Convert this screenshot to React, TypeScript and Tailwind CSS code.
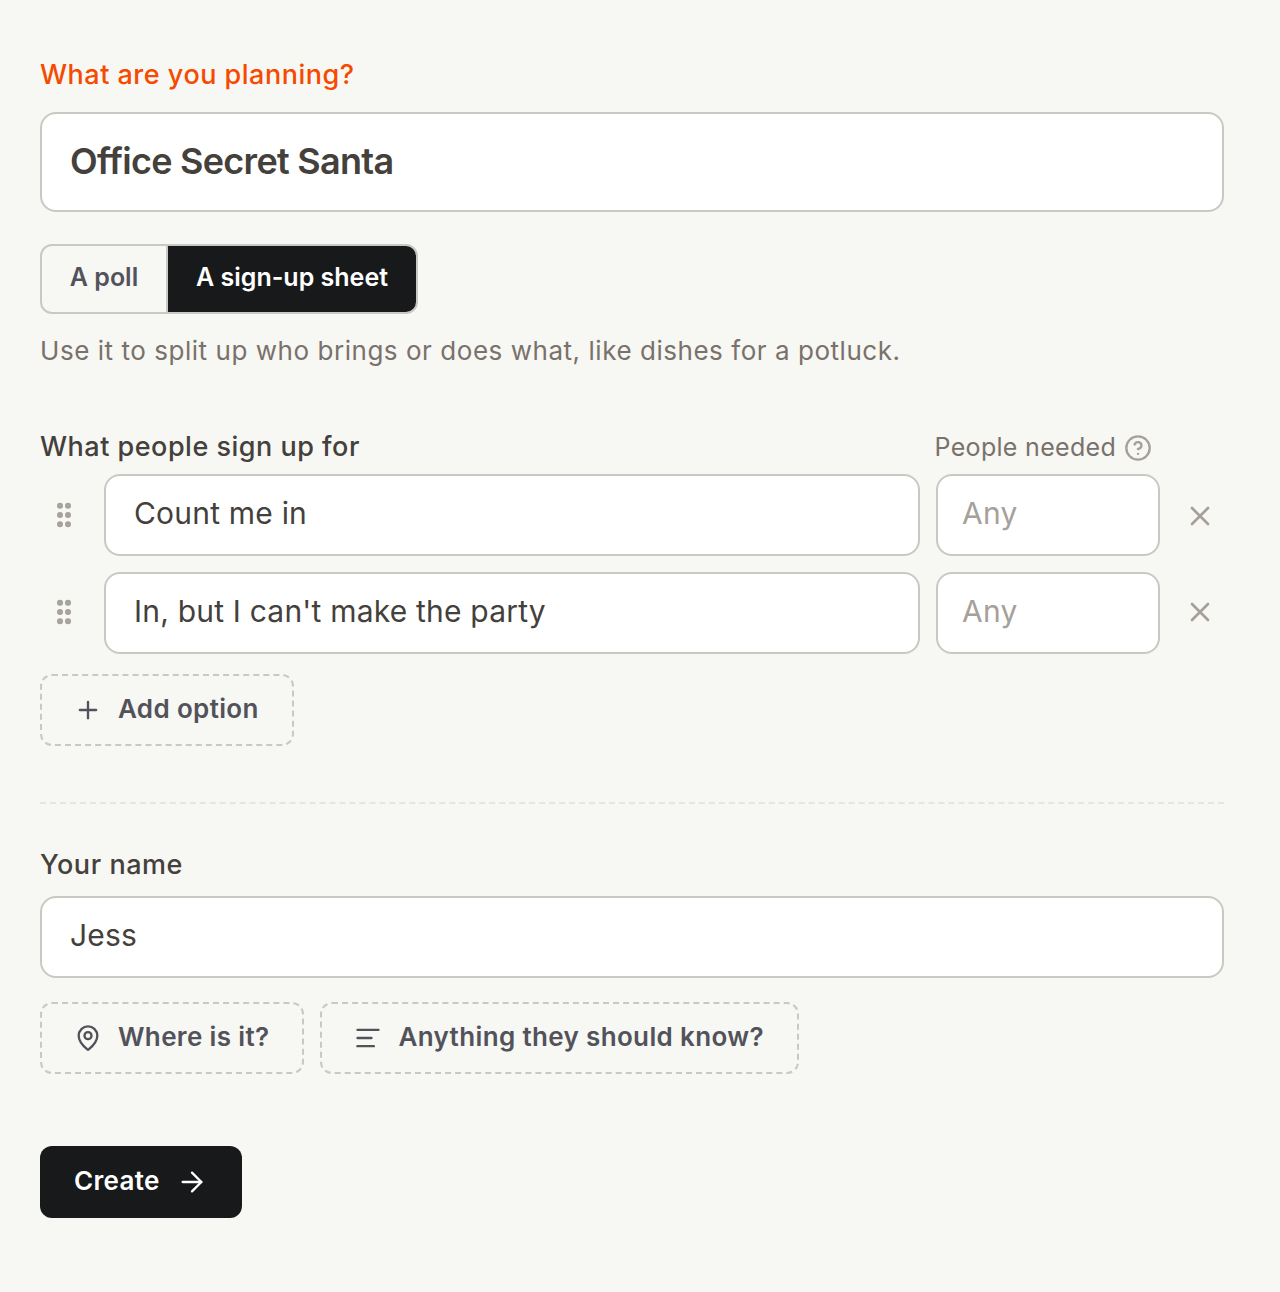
import { AlignLeft, ArrowRight, CircleHelp, GripVertical, MapPin, Plus, X } from "lucide-react"

const options = ["Count me in", "In, but I can't make the party"]

function DashedButton({ icon, label }: { icon: React.ReactNode; label: string }) {
  return (
    <button className="flex h-[72px] items-center gap-[16px] rounded-[12px] border-2 border-dashed border-[#c9c9c3] pr-[33px] pl-[32px] text-[26px] font-semibold tracking-[0.35px] text-[#52525b]">
      {icon}
      <span className="pb-[4px]">{label}</span>
    </button>
  )
}

export default function App() {
  return (
    <div className="min-h-[1292px] bg-[#f7f7f3] pt-[56px] pr-[56px] pl-[40px] font-['Inter',sans-serif]">
      <div className="pt-[2px] text-[27px] leading-[34px] font-[450] tracking-[0.5px] text-[#f54a00]">What are you planning?</div>
      <div className="mt-[20px] flex h-[100px] items-center rounded-[16px] border-2 border-[#c9c9c3] bg-white px-[28px] pb-[2px] text-[36px] font-semibold tracking-[-0.72px] text-[#44403b]">
        Office Secret Santa
      </div>

      <div className="mt-[32px] flex h-[70px] w-[378px] overflow-hidden rounded-[12px] border-2 border-[#c9c9c3] text-[25px] font-semibold">
        <div className="flex w-[126px] items-center justify-center border-r-2 border-[#c9c9c3] pb-[2px] text-[#52525b]">A poll</div>
        <div className="flex flex-1 items-center justify-center bg-[#18191b] pb-[2px] text-white">A sign-up sheet</div>
      </div>
      <p className="mt-[18px] text-[26px] leading-[38px] tracking-[0.54px] text-[#79716b]">
        Use it to split up who brings or does what, like dishes for a potluck.
      </p>

      <div className="mt-[58px] flex h-[38px] items-center justify-between">
        <div className="text-[27px] font-[450] tracking-[0.5px] text-[#44403b]">What people sign up for</div>
        <div className="mr-[72px] flex items-center gap-[8px] pt-[2px] text-[25px] tracking-[0.3px] text-[#79716b]">
          People needed
          <CircleHelp className="size-[28px] text-[#a6a09b]" strokeWidth={2} />
        </div>
      </div>

      <div className="mt-[8px] flex flex-col gap-[16px]">
        {options.map((o, i) => (
          <div key={o} className="flex items-center">
            <div className={i === 0 ? "flex w-[64px] justify-start pl-[8px]" : "flex w-[64px] justify-start pb-[2px] pl-[8px]"}>
              <GripVertical className="size-[32px] text-[#a6a09b]" strokeWidth={2.5} />
            </div>
            <div className="flex h-[82px] w-[816px] items-center rounded-[16px] border-2 border-[#c9c9c3] bg-white px-[28px] pb-[4px] text-[30px] tracking-[0.2px] text-[#44403b]">
              {o}
            </div>
            <div className="ml-[16px] flex h-[82px] w-[224px] items-center rounded-[16px] border-2 border-[#c9c9c3] bg-white px-[24px] pb-[4px] text-[30px] tracking-[0.2px] text-[#a6a09b]">
              Any
            </div>
            <X className={i === 0 ? "mt-[2px] ml-[24px] size-[32px] text-[#a6a09b]" : "mb-[2px] ml-[24px] size-[32px] text-[#a6a09b]"} strokeWidth={2} />
          </div>
        ))}
      </div>

      <div className="mt-[20px] flex">
        <DashedButton icon={<Plus className="size-[28px]" strokeWidth={2} />} label="Add option" />
      </div>

      <div className="mt-[56px] border-t-2 border-dashed border-[#e7e5e0]" />

      <div className="mt-[43px] text-[27px] leading-[36px] font-[450] tracking-[0.55px] text-[#44403b]">Your name</div>
      <div className="mt-[13px] flex h-[82px] items-center rounded-[16px] border-2 border-[#c9c9c3] bg-white px-[28px] pb-[4px] text-[30px] tracking-[0.2px] text-[#44403b]">
        Jess
      </div>

      <div className="mt-[24px] flex gap-[16px]">
        <DashedButton icon={<MapPin className="size-[28px]" strokeWidth={2} />} label="Where is it?" />
        <DashedButton icon={<AlignLeft className="size-[28px]" strokeWidth={2} />} label="Anything they should know?" />
      </div>

      <button className="mt-[72px] flex h-[72px] items-center gap-[16px] rounded-[12px] bg-[#18191b] pr-[34px] pl-[34px] text-[26px] font-semibold tracking-[0.3px] text-white">
        <span className="pb-[4px]">Create</span>
        <ArrowRight className="size-[32px]" strokeWidth={1.75} />
      </button>
    </div>
  )
}
